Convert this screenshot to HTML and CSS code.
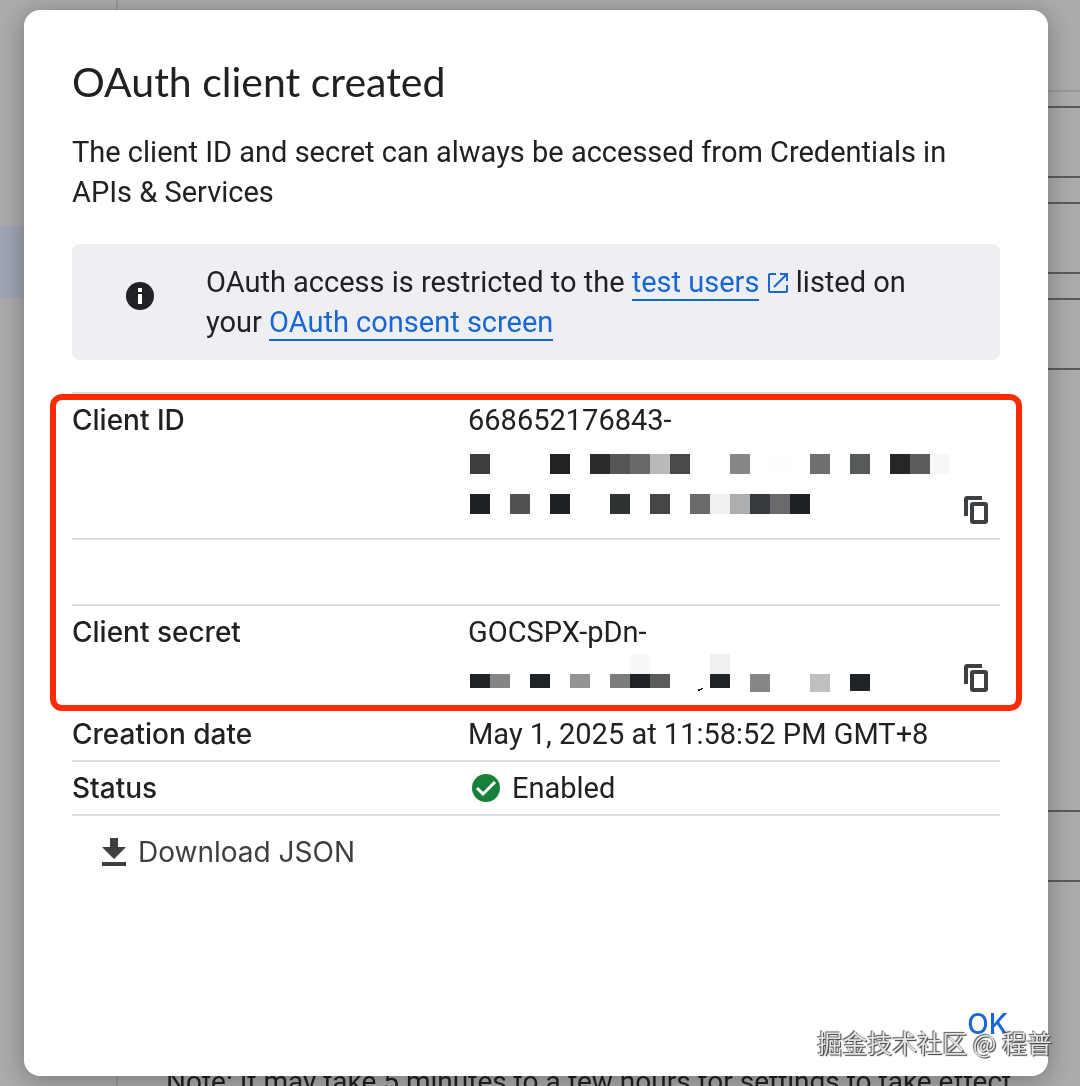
FILE: index.html
```html
<!DOCTYPE html>
<html lang="en">
<head>
  <meta charset="UTF-8" />
  <meta name="viewport" content="width=device-width, initial-scale=1.0" />
  <title>OAuth client created</title>
  <link rel="stylesheet" href="styles.css">
</head>
<body>

  <div class="page" aria-hidden="true">
    <div class="sidebar">
      <div class="sidebar-item"></div>
    </div>
    <div class="content">
      <div class="toolbar"></div>
      <div class="fields">
        <div class="field"></div>
        <div class="field"></div>
        <div class="field"></div>
        <div class="field field-last"></div>
      </div>
      <p class="note">Note: It may take 5 minutes to a few hours for settings to take effect</p>
    </div>
  </div>

  <div class="dialog" role="dialog" aria-labelledby="dialog-title">
    <h1 id="dialog-title">OAuth client created</h1>
    <p class="intro">The client ID and secret can always be accessed from Credentials in APIs &amp; Services</p>

    <div class="info">
      <svg class="info-icon" width="28" height="28" viewBox="0 0 28 28">
        <circle cx="14" cy="14" r="14" fill="#202124" />
        <path d="M12 6h4v4h-4zM12 12h4v10h-4z" fill="#fff" />
      </svg>
      <p>OAuth access is restricted to the <a href="#">test users</a>
        <svg class="open-icon" width="22" height="22" viewBox="0 0 22 22" fill="none" stroke="#1967d2" stroke-width="2">
          <path d="M9 2H3Q2 2 2 3V19Q2 20 3 20H19Q20 20 20 19V13M13 2H20V9M20 2L7 15" />
        </svg>
        listed on your <a href="#">OAuth consent screen</a></p>
    </div>

    <div class="details">
      <table>
        <tr class="row-id">
          <th scope="row">Client ID</th>
          <td>
            <div class="secret">
              <div>
                668652176843-
                <svg class="mosaic" width="484" height="84" viewBox="0 0 484 84" shape-rendering="crispEdges">
                  <path fill="#3d3f40" d="M2 14h20v20h-20z" />
                  <path fill="#202325" d="M82 14h20v20h-20z" />
                  <path fill="#2b2d2d" d="M122 14h20v20h-20z" />
                  <path fill="#545557" d="M142 14h20v20h-20z" />
                  <path fill="#69696b" d="M162 14h20v20h-20z" />
                  <path fill="#b8baba" d="M182 14h20v20h-20z" />
                  <path fill="#484a4c" d="M202 14h20v20h-20z" />
                  <path fill="#868787" d="M262 14h20v20h-20z" />
                  <path fill="#fdfdfd" d="M302 14h20v20h-20z" />
                  <path fill="#6d6e6e" d="M342 14h20v20h-20z" />
                  <path fill="#565a5a" d="M382 14h20v20h-20z" />
                  <path fill="#242628" d="M422 14h20v20h-20z" />
                  <path fill="#5a5d5c" d="M442 14h20v20h-20z" />
                  <path fill="#f7f7f7" d="M462 14h20v20h-20z" />
                  <path fill="#1f2224" d="M2 54h20v20h-20zM82 54h20v20h-20zM322 54h20v20h-20z" />
                  <path fill="#505253" d="M42 54h20v20h-20z" />
                  <path fill="#303333" d="M142 54h20v20h-20z" />
                  <path fill="#464648" d="M182 54h20v20h-20z" />
                  <path fill="#6a6a6c" d="M222 54h20v20h-20zM302 54h20v20h-20z" />
                  <path fill="#f0f0f0" d="M242 54h20v20h-20z" />
                  <path fill="#adaeaf" d="M262 54h20v20h-20z" />
                  <path fill="#353a3c" d="M282 54h20v20h-20z" />
                </svg>
              </div>
              <button class="copy" type="button" aria-label="Copy client ID">
                <svg width="24" height="28" viewBox="0 0 24 28" fill="none" stroke="#3c4043" stroke-width="4">
                  <path d="M2 20V3Q2 2 3 2H18" />
                  <rect x="8" y="8" width="14" height="18" rx="1" />
                </svg>
              </button>
            </div>
          </td>
        </tr>
        <tr class="row-empty">
          <td colspan="2"></td>
        </tr>
        <tr class="row-secret">
          <th scope="row">Client secret</th>
          <td>
            <div class="secret">
              <div>
                GOCSPX-pDn-
                <svg class="mosaic" width="484" height="40" viewBox="0 0 484 40" shape-rendering="crispEdges">
                  <path fill="#202325" d="M2 22h20v14h-20zM62 22h20v14h-20zM162 22h20v14h-20zM242 22h20v14h-20zM382 22h20v17h-20z" />
                  <path fill="#848587" d="M22 22h20v14h-20z" />
                  <path fill="#939594" d="M102 22h20v14h-20z" />
                  <path fill="#7b7c7c" d="M142 22h20v14h-20z" />
                  <path fill="#5a5c5c" d="M182 22h20v14h-20z" />
                  <path fill="#f7f7f7" d="M162 2h20v20h-20z" />
                  <path fill="#f0f0f0" d="M242 2h20v20h-20z" />
                  <path fill="#858686" d="M282 22h20v18h-20z" />
                  <path fill="#bfbfbf" d="M342 22h20v18h-20z" />
                  <path fill="#202325" d="M230 37l5-1-1 2-4 1z" />
                </svg>
              </div>
              <button class="copy" type="button" aria-label="Copy client secret">
                <svg width="24" height="28" viewBox="0 0 24 28" fill="none" stroke="#3c4043" stroke-width="4">
                  <path d="M2 20V3Q2 2 3 2H18" />
                  <rect x="8" y="8" width="14" height="18" rx="1" />
                </svg>
              </button>
            </div>
          </td>
        </tr>
        <tr>
          <th scope="row">Creation date</th>
          <td>May 1, 2025 at 11:58:52 PM GMT+8</td>
        </tr>
        <tr>
          <th scope="row">Status</th>
          <td>
            <div class="status">
              <svg width="28" height="28" viewBox="0 0 28 28">
                <circle cx="14" cy="14" r="14" fill="#188038" />
                <path d="M5 14l6 6L23 8" fill="none" stroke="#fff" stroke-width="3" />
              </svg>
              Enabled
            </div>
          </td>
        </tr>
      </table>
      <div class="highlight"></div>
    </div>

    <button class="download" type="button">
      <svg width="24" height="28" viewBox="0 0 24 28" fill="#3c4043">
        <path d="M8 0h8v9h8L12 21 0 9h8zM0 24h24v4H0z" />
      </svg>
      Download JSON
    </button>

    <div class="actions">
      <button class="ok" type="button">OK</button>
    </div>
  </div>

  <div class="watermark">掘金技术社区 @ 程普</div>

</body>
</html>
```
FILE: styles.css
```css
* {
  box-sizing: border-box;
}

body {
  font-family: Roboto, sans-serif;
  font-size: 28px;
  line-height: 40px;
  margin: 0;
  min-height: 100vh;
  padding: 10px 32px 10px 24px;
  background: #ababab;
  color: #202124;
  display: flex;
}

h1, p {
  margin: 0;
}

button {
  padding: 0;
  border: none;
  background: none;
  font: inherit;
  cursor: pointer;
}

svg {
  flex: none;
}

/* console page behind the dialog */
.page {
  position: fixed;
  inset: 0;
  display: flex;
  overflow: hidden;
}

.sidebar {
  width: 118px;
  flex: none;
  padding-top: 226px;
  border-right: 2px solid #9a9a9a;
}

.sidebar-item {
  height: 72px;
  background: #9ea4b3;
}

.content {
  flex: 1;
}

.toolbar {
  height: 92px;
  border-bottom: 2px solid #999;
}

.fields {
  display: flex;
  flex-direction: column;
  gap: 24px;
  padding: 14px 0 0 48px;
}

.field {
  height: 72px;
  border: 2px solid #5a5a5a;
  border-right: none;
}

.field-last {
  margin-top: 416px;
}

.note {
  margin-top: 180px;
  padding-left: 48px;
  white-space: nowrap;
}

/* dialog */
.dialog {
  position: relative;
  flex: 1;
  display: flex;
  flex-direction: column;
  padding: 48px 48px 32px;
  background: #fff;
  border-radius: 16px;
  box-shadow: 0 4px 24px rgba(0, 0, 0, 0.3);
}

h1 {
  font-family: Lato, sans-serif;
  font-size: 41px;
  font-weight: 400;
  line-height: 48px;
}

.intro {
  margin-top: 26px;
  padding-right: 32px;
}

.intro, .info, td {
  font-size: 29px;
}

.info {
  display: flex;
  gap: 52px;
  margin-top: 32px;
  padding: 18px 54px;
  background: #eeeff2;
  border-radius: 8px;
}

.info-icon {
  margin-top: 20px;
}

.info a {
  color: #1967d2;
  text-decoration: none;
  border-bottom: 2px solid #1967d2;
}

.open-icon {
  vertical-align: -2px;
}

.details {
  position: relative;
  margin-top: 32px;
}

table {
  width: 100%;
  border-collapse: collapse;
  table-layout: fixed;
}

tr {
  border-top: 2px solid #dadce0;
  border-bottom: 2px solid #dadce0;
}

th, td {
  height: 54px;
  padding: 6px 0;
  text-align: left;
  vertical-align: top;
}

th {
  width: 396px;
  font-family: Inter, sans-serif;
  font-weight: 500;
}

.row-id td {
  height: 146px;
}

.row-empty td {
  height: 66px;
}

.row-secret td {
  height: 102px;
}

.secret {
  display: flex;
  justify-content: space-between;
  align-items: flex-end;
  padding-right: 12px;
}

.mosaic {
  display: block;
}

.copy {
  display: flex;
}

.status {
  display: flex;
  align-items: center;
  gap: 12px;
  padding-left: 4px;
}

.highlight {
  position: absolute;
  top: 2px;
  left: -22px;
  right: -22px;
  height: 317px;
  border: 6px solid #fb2b05;
  border-radius: 12px;
}

.download {
  display: flex;
  align-items: center;
  gap: 12px;
  align-self: flex-start;
  margin: 16px 0 0 30px;
  font-family: Inter, sans-serif;
  color: #3c4043;
}

.actions {
  display: flex;
  justify-content: flex-end;
  margin-top: auto;
  margin-right: -8px;
}

.ok {
  font-family: Inter, sans-serif;
  font-weight: 500;
  color: #1967d2;
}

.watermark {
  position: absolute;
  right: 28px;
  bottom: 24px;
  font-family: "Noto Sans CJK SC", sans-serif;
  font-size: 25px;
  line-height: 40px;
  color: #e4e4e4;
  text-shadow: -1px -1px 1px #555, 1px 1px 1px #333;
}
```
